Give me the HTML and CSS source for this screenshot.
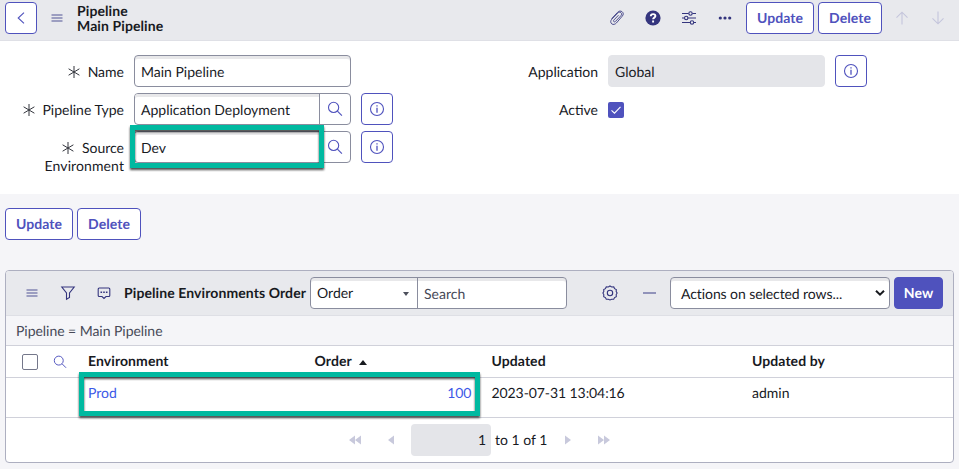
FILE: index.html
```html
<!DOCTYPE html>
<html lang="en">
<head>
<meta charset="utf-8">
<title>Main Pipeline | Pipeline</title>
<link rel="stylesheet" href="styles.css">
</head>
<body>
<svg class="defs" width="0" height="0">
  <symbol id="menu" viewBox="0 0 12 8"><path d="M.5 1h11M.5 4h11M.5 7h11" stroke-width="1.6"/></symbol>
  <symbol id="star" viewBox="0 0 12 12"><path d="M6 0v12M.6 2.8l10.8 6.4M11.4 2.8L.6 9.2" stroke-width="1"/></symbol>
  <symbol id="search" viewBox="0 0 16 16"><circle cx="6.6" cy="6.4" r="5.1"/><path d="M10.4 10.1l4.5 4.5"/></symbol>
  <symbol id="info" viewBox="0 0 16 16"><circle cx="8" cy="8" r="6.5"/><path d="M8 4.3v1.2M8 6.7v5" stroke-width="1.3"/></symbol>
  <symbol id="up" viewBox="0 0 14 14"><path d="M7 13.5V1.2M1.5 6.7L7 1.2l5.5 5.5"/></symbol>
</svg>

<header class="form-header">
  <button class="btn btn-square"><svg width="8" height="12" viewBox="0 0 8 12"><path d="M7 .6L1.2 6 7 11.4"/></svg></button>
  <svg class="menu" width="12" height="8"><use href="#menu"/></svg>
  <h1 class="title"><span>Pipeline</span><span>Main Pipeline</span></h1>
  <div class="tools">
    <svg class="tool clip" viewBox="0 0 16 16"><path d="M2.600 8.700l6.100-6.500c1.300-1.400 3.100-1.500 4.500-.4s1.400 2.900.1 4.300L7.400 13c-1.300 1.300-3.100 2-4.600.9-1.500-1.200-1.400-3.100 0-4.700l5.900-6.100c.9-1 2.400-1.200 3.300-.4s.8 2-.1 3l-5.400 5.700c-.6.6-1.300.6-1.700.2s-.4-1.100.2-1.700l4.500-4.700"/></svg>
    <svg class="tool" viewBox="0 0 16 16"><circle class="solid" cx="8" cy="8" r="7.600"/><path class="white" d="M5.800 6.300c0-1.500 1-2.200 2.300-2.200s2.300.8 2.300 2c0 1.500-2.300 1.600-2.300 3.200M8.100 10.600v1.900"/></svg>
    <svg class="tool" viewBox="0 0 16 16"><path d="M1 3.500h6.600M11.400 3.500H15M1 8h2.400M7 8h8M1 12.500h8.200M12.800 12.500H15"/><circle cx="9.500" cy="3.500" r="1.700"/><circle cx="5.200" cy="8" r="1.700"/><circle cx="11" cy="12.500" r="1.700"/></svg>
    <svg class="tool" viewBox="0 0 16 16"><g class="solid"><circle cx="3.300" cy="8" r="1.600"/><circle cx="8" cy="8" r="1.600"/><circle cx="12.700" cy="8" r="1.600"/></g></svg>
  </div>
  <div class="btn-row">
    <button class="btn w-update">Update</button>
    <button class="btn w-delete">Delete</button>
  </div>
  <svg class="arrow" width="14" height="14"><use href="#up"/></svg>
  <svg class="arrow down" width="14" height="14"><use href="#up"/></svg>
</header>

<main class="form">
  <div class="col">
    <div class="row">
      <label class="label"><svg class="star"><use href="#star"/></svg>Name</label>
      <div class="field">Main Pipeline</div>
    </div>
    <div class="row">
      <label class="label"><svg class="star"><use href="#star"/></svg>Pipeline Type</label>
      <div class="field lookup"><span class="value">Application Deployment</span><span class="find"><svg width="16" height="16"><use href="#search"/></svg></span></div>
      <button class="btn btn-square info"><svg width="16" height="16"><use href="#info"/></svg></button>
    </div>
    <div class="row">
      <label class="label">
        <svg class="star"><use href="#star"/></svg>Source<br><span class="wide">Environment</span></label>
      <div class="field lookup"><span class="value">Dev</span><span class="find"><svg width="16" height="16"><use href="#search"/></svg></span><i class="highlight source"></i></div>
      <button class="btn btn-square info"><svg width="16" height="16"><use href="#info"/></svg></button>
    </div>
  </div>
  <div class="col">
    <div class="row">
      <label class="label">Application</label>
      <div class="field readonly">Global</div>
      <button class="btn btn-square info"><svg width="16" height="16"><use href="#info"/></svg></button>
    </div>
    <div class="row">
      <label class="label">Active</label>
      <span class="check on"><svg width="16" height="16" viewBox="0 0 16 16"><path d="M3.500 8.300l3 2.900 6-6.400"/></svg></span>
    </div>
  </div>
</main>

<div class="btn-row form-actions">
  <button class="btn w-update">Update</button>
  <button class="btn w-delete">Delete</button>
</div>

<section class="panel">
  <div class="list-bar">
    <svg class="menu" width="12" height="8"><use href="#menu"/></svg>
    <svg class="filter" width="14" height="14" viewBox="0 0 14 14"><path d="M.8 1h12.400L8.500 7v4.500L5.500 13.300V7z"/></svg>
    <svg class="chat" width="14" height="14" viewBox="0 0 14 14"><path d="M2.200 2h9.600q1 0 1 1v6.500q0 1-1 1H9l-2 2-2-2H2.200q-1 0-1-1V3q0-1 1-1z"/><path d="M3.500 6.200h1.600M6.200 6.200h1.600M8.900 6.200h1.600" stroke-width="1.600"/></svg>
    <h2 class="list-title">Pipeline Environments Order</h2>
    <div class="search-group"><span class="pick">Order<i class="caret"></i></span><span class="query">Search</span></div>
    <svg class="gear" width="16" height="16" viewBox="0 0 16 16"><path d="M8 1l1.700 1 2-.1.900 1.700 1.700 1L14.200 6.500 15.100 8l-.9 1.600.1 2-1.700 1-.9 1.700-2-.1L8 15l-1.700-.8-2 .1-.9-1.700-1.700-1 .1-2L.9 8l.9-1.500-.1-1.900 1.700-1 .9-1.700 2 .1z"/><circle cx="8" cy="8" r="2.700"/></svg>
    <i class="dash"></i>
    <div class="actions">Actions on selected rows...<svg width="10" height="8" viewBox="0 0 10 8"><path d="M1 1.700l4 4 4-4"/></svg></div>
    <button class="btn primary">New</button>
  </div>
  <div class="crumb">Pipeline = Main Pipeline</div>
  <div class="grid head">
    <span class="check"></span>
    <svg class="mini" width="14" height="14" viewBox="0 0 16 16"><use href="#search"/></svg>
    <span>Environment</span><span>Order<i class="sort"></i></span><span>Updated</span><span>Updated by</span>
  </div>
  <div class="grid data">
    <span></span><span></span>
    <a>Prod</a><a class="num">100</a><span class="date">2023-07-31 13:04:16</span><span>admin</span>
    <i class="highlight record"></i>
  </div>
  <div class="pager">
    <svg width="12" height="10" viewBox="0 0 12 10"><path d="M6 .5v9L0 5zM12 .5v9L6 5z"/></svg>
    <svg class="prev" width="6" height="10" viewBox="0 0 6 10"><path d="M6 .5v9L0 5z"/></svg>
    <span class="page">1</span><span class="total">to 1 of 1</span>
    <svg class="next" width="6" height="10" viewBox="0 0 6 10"><path d="M0 .5v9L6 5z"/></svg>
    <svg class="last" width="12" height="10" viewBox="0 0 12 10"><path d="M0 .5v9L6 5zM6 .5v9L12 5z"/></svg>
  </div>
</section>
</body>
</html>
```
FILE: styles.css
```css
* { box-sizing: border-box; }
body {
  margin: 0;
  height: 469px;
  overflow: hidden;
  background: #f5f5f8;
  color: #181a1f;
  font: 14px/18px Lato, "Liberation Sans", sans-serif;
  text-rendering: geometricPrecision;
}
svg { display: block; flex: none; fill: none; stroke: #4f52bd; stroke-width: 1.1; overflow: visible; }
.defs { position: absolute; }
h1, h2 { margin: 0; }

.btn {
  display: flex;
  align-items: center;
  justify-content: center;
  flex: none;
  height: 32px;
  padding: 0 0 1px;
  border: 1px solid #4f52bd;
  border-radius: 4px;
  background: #fff;
  color: #4f52bd;
  font: bold 14px/18px Lato, sans-serif;
  letter-spacing: .06px;
  text-rendering: geometricPrecision;
}
.btn-square { width: 32px; padding: 0; }
.btn-row { display: flex; gap: 4px; }
.w-update { width: 68px; }
.w-delete { width: 64px; }

.form-header {
  display: flex;
  align-items: flex-start;
  height: 41px;
  padding: 2px 0 0 5px;
  background: #e8e9ed;
  border-bottom: 1px solid #dfe0e6;
}
.menu { stroke: #8385b3; }
.form-header .menu { margin: 12px 14px 0; }
.title { width: 533px; padding-top: 1px; font-size: 14px; line-height: 15px; letter-spacing: .1px; }
.title span { display: block; }
.tools { display: flex; gap: 20px; margin: 8px 13px 0 -1px; }
.tool { width: 16px; height: 16px; stroke: #34357e; }
.clip { stroke-width: .85; }
.tool .solid { fill: #34357e; stroke: none; }
.tool .white { stroke: #fff; stroke-width: 1.900; }
.arrow { margin: 9px 0 0 13px; stroke: #c4c5dc; }
.arrow.down { margin-left: 22px; transform: rotate(180deg); }

.form { display: flex; height: 153px; padding-top: 14px; background: #fff; }
.col { display: flex; flex-direction: column; gap: 6px; width: 474px; }
.row { display: flex; height: 32px; }
.label { width: 124px; margin-right: 10px; padding-top: 8px; text-align: right; white-space: nowrap; }
.wide { letter-spacing: .1px; }
.star { display: inline-block; width: 12px; height: 12px; margin-right: 7.5px; vertical-align: -1px; stroke: #33353d; }
.field {
  position: relative;
  display: flex;
  width: 217px;
  height: 32px;
  padding: 7px 6px;
  border: 1px solid #8a8d9e;
  border-radius: 4px;
  background: #fff;
  box-shadow: inset 0 3px #e8e8ea;
}
.lookup { padding: 0; box-shadow: none; }
.value { flex: 1; padding: 7px 6px; box-shadow: inset 0 3px #e8e8ea; border-radius: 3px 0 0 3px; }
.find { width: 31px; padding: 7px 0 0 7px; border-left: 1px solid #8a8d9e; }
.readonly { border-color: #e4e5e9; background: #e4e5e9; box-shadow: none; }
.info { margin-left: 10px; }
.check { width: 16px; height: 16px; border: 1px solid #74778a; border-radius: 2px; background: #fff; }
.check.on { margin-top: 9px; border: 0; background: #4f52bd; }
.check.on svg { stroke: #fff; }

.highlight {
  position: absolute;
  z-index: 2;
  border: 5px solid #00b9a0;
  filter: drop-shadow(0 2px 1px rgba(0, 0, 0, .7));
}
.source { left: -5px; top: -7px; width: 194px; height: 43px; }
.record { left: 73px; top: -6px; width: 401px; height: 44px; }

.form-actions { padding: 14px 5px 30px; }

.panel { margin: 0 5px; width: 949px; height: 193px; border: 1px solid #adafc0; border-radius: 4px; background: #fff; overflow: hidden; }
.list-bar { display: flex; align-items: center; height: 45px; padding: 0 10px 0 20px; background: #e8e9ed; border-bottom: 1px solid #dedfe5; }
.filter { margin-left: 23px; stroke: #34357e; }
.chat { margin-left: 22px; stroke: #34357e; }
.list-title { width: 186px; margin-left: 13px; font-size: 14px; line-height: 18px; letter-spacing: .09px; white-space: nowrap; }
.search-group { display: flex; width: 257px; height: 32px; border: 1px solid #8a8d9e; border-radius: 4px; background: #fff; box-shadow: inset 0 3px #e8e8ea; }
.pick { display: flex; align-items: center; justify-content: space-between; width: 107px; padding: 0 8px 1px 6px; border-right: 1px solid #8a8d9e; }
.caret { border: 3.5px solid transparent; border-top: 4px solid #4d505c; border-bottom: 0; margin-top: 2px; }
.query { padding: 7px 6px; color: #464957; }
.gear { margin-left: 35px; stroke: #34357e; }
.dash { width: 13px; height: 2px; margin: 0 14px 0 25px; background: #9193ba; }
.actions { display: flex; align-items: center; justify-content: space-between; width: 220px; height: 32px; padding: 2px 4px 0 10px; border: 1px solid #8a8d9e; border-radius: 4px; background: #fff; box-shadow: inset 0 3px #e8e8ea; letter-spacing: -.08px; }
.actions svg { margin-bottom: 2px; stroke: #181a1f; stroke-width: 2; }
.primary { width: 49px; margin-left: 4px; background: #4f52bd; color: #fff; }
.crumb { height: 30px; padding: 6px 10px; border-bottom: 1px solid #d0d1da; background: #f5f5f8; color: #464957; letter-spacing: -.04px; }
.grid { position: relative; display: grid; grid-template-columns: 31px 35px 226.5px 177px 260.5px 1fr; padding-left: 16px; border-bottom: 1px solid #d0d1da; }
.head { height: 32px; padding-top: 6px; font-weight: bold; letter-spacing: .08px; }
.head .check { margin-top: 2px; }
.mini { margin-top: 3px; }
.sort { display: inline-block; margin-left: 7px; border: 4.5px solid transparent; border-bottom: 5px solid #181a1f; border-top: 0; vertical-align: 1px; }
.data { height: 40px; padding-top: 6px; }
.data a { color: #3c59e7; }
.data .num { padding-right: 20px; text-align: right; }
.date { letter-spacing: -.08px; }
.pager { display: flex; align-items: center; height: 44px; padding-left: 343px; }
.pager svg { fill: #c8c9dc; stroke: none; }
.prev { margin-left: 27px; }
.page { width: 80px; height: 32px; margin-left: 17px; padding: 7px 5px; border-radius: 4px; background: #e4e5e9; text-align: right; }
.total { width: 57px; margin-left: 4px; white-space: nowrap; }
.next { margin-left: 13px; }
.last { margin-left: 27px; }
```
